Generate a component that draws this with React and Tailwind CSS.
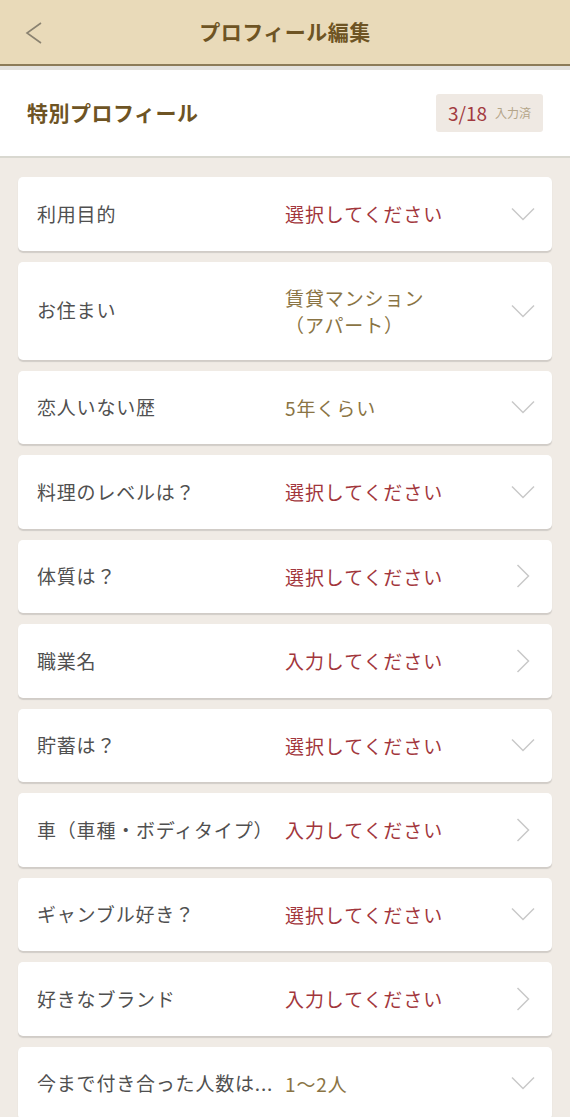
const items = [
  { label: "利用目的", value: "選択してください", state: "empty", icon: "down" },
  { label: "お住まい", value: ["賃貸マンション", "（アパート）"], state: "filled", icon: "down", tall: true },
  { label: "恋人いない歴", value: "5年くらい", state: "filled", icon: "down" },
  { label: "料理のレベルは？", value: "選択してください", state: "empty", icon: "down" },
  { label: "体質は？", value: "選択してください", state: "empty", icon: "right" },
  { label: "職業名", value: "入力してください", state: "empty", icon: "right" },
  { label: "貯蓄は？", value: "選択してください", state: "empty", icon: "down" },
  { label: "車（車種・ボディタイプ）", value: "入力してください", state: "empty", icon: "right" },
  { label: "ギャンブル好き？", value: "選択してください", state: "empty", icon: "down" },
  { label: "好きなブランド", value: "入力してください", state: "empty", icon: "right" },
  { label: "今まで付き合った人数は...", value: "1〜2人", state: "filled", icon: "down" },
];

const ChevronDown = () => (
  <svg width="24" height="14" viewBox="0 0 24 14" fill="none">
    <path d="M1 1.5 L12 12.5 L23 1.5" stroke="#c9c9c9" strokeWidth="1.5" />
  </svg>
);

const ChevronRight = () => (
  <svg width="14" height="24" viewBox="0 0 14 24" fill="none">
    <path d="M1.5 1 L12.5 12 L1.5 23" stroke="#c9c9c9" strokeWidth="1.5" />
  </svg>
);

const Row = ({ item }) => {
  const color = item.state === "empty" ? "text-[#a2363c]" : "text-[#8a7444]";
  return (
    <div
      className={`flex items-center bg-white rounded-[5px] shadow-[0_1.5px_1px_rgba(0,0,0,0.13)] pl-[19px] pr-[16px] ${
        item.tall ? "h-[98px]" : "h-[73.5px]"
      }`}
    >
      <div className="w-[248px] shrink-0 text-[19px] text-[#505050] whitespace-nowrap tracking-[0.8px]">
        {item.label}
      </div>
      <div className={`flex-1 text-[19px] leading-[27px] tracking-[0.9px] ${color}`}>
        {Array.isArray(item.value) ? (
          <>
            <div>{item.value[0]}</div>
            <div>{item.value[1]}</div>
          </>
        ) : (
          item.value
        )}
      </div>
      <div className="w-[26px] flex justify-center">
        {item.icon === "down" ? <ChevronDown /> : <ChevronRight />}
      </div>
    </div>
  );
};

export default function App() {
  return (
    <div
      className="w-[570px] h-[1117px] overflow-hidden bg-[#f0ebe5]"
      style={{ fontFamily: '"Noto Sans CJK JP", "Noto Sans", sans-serif' }}
    >
      <header className="relative h-[66px] bg-[#e9dab9] flex items-center justify-center border-b-[2px] border-[#8c7b58]">
        <div className="absolute left-[24px] top-[22px]">
          <svg width="20" height="22" viewBox="0 0 20 22" fill="none">
            <path d="M17 1 L3 11 L17 21" stroke="#8a8270" strokeWidth="1.6" />
          </svg>
        </div>
        <h1 className="text-[21px] font-bold text-[#6e5424] tracking-[0.5px]">プロフィール編集</h1>
      </header>
      <div className="h-[4px] bg-[#e4e2de]" />
      <section className="h-[88px] bg-white border-b-[2px] border-[#d9d8d0] flex items-center justify-between pl-[27px] pr-[27px]">
        <h2 className="text-[21px] font-bold text-[#6e5424] tracking-[0.5px]">特別プロフィール</h2>
        <div className="h-[38px] w-[107px] bg-[#efe9e3] rounded-[3px] flex items-center justify-center gap-[8px]">
          <span className="text-[19px] text-[#a23a40]">3/18</span>
          <span className="text-[12px] text-[#b4a589]">入力済</span>
        </div>
      </section>
      <div className="px-[18px] pt-[19px] flex flex-col gap-[11px]">
        {items.map((item, i) => (
          <Row key={i} item={item} />
        ))}
      </div>
    </div>
  );
}
